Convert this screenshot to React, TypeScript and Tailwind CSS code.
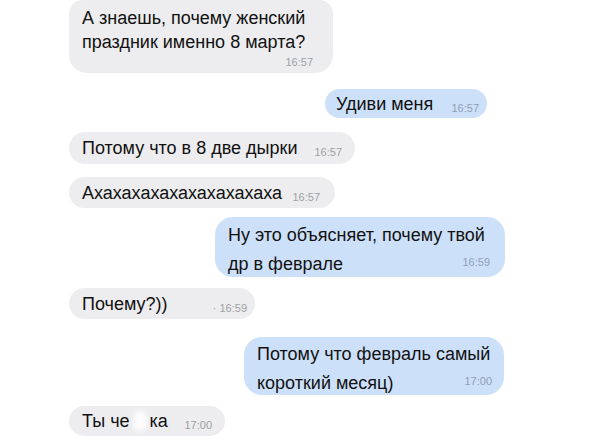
import React from 'react';

const font = { fontFamily: '"Liberation Sans", Arial, sans-serif' };

function Time({ children, blue }: { children: React.ReactNode; blue?: boolean }) {
  return (
    <span className={`text-[11px] leading-[14px] ${blue ? 'text-[#8d9fb6]' : 'text-[#9c9fa4]'}`}>
      {children}
    </span>
  );
}

export default function App() {
  return (
    <div className="w-[600px] h-[440px] overflow-hidden bg-white text-[18px] text-[#111]" style={font}>
      <div className="flex flex-col">
        {/* 1 */}
        <div className="ml-[69px] w-[264px] h-[73px] rounded-b-[18px] rounded-t-[14px] bg-[#ededef] px-[13px] pt-[6px] flex flex-col">
          <div className="leading-[24px] whitespace-nowrap">
            А знаешь, почему женский
            <br />
            праздник именно 8 марта?
          </div>
          <div className="flex justify-end pr-[7px] pt-[1px]">
            <Time>16:57</Time>
          </div>
        </div>

        {/* 2 */}
        <div className="mt-[16px] ml-auto mr-[113px] w-[162px] h-[29px] rounded-full bg-[#cde0f9] pl-[11px] pr-[8px] flex items-center justify-between">
          <span className="leading-[24px]">Удиви меня</span>
          <span className="pt-[5px]"><Time blue>16:57</Time></span>
        </div>

        {/* 3 */}
        <div className="mt-[14px] ml-[69px] w-[286px] h-[32px] rounded-full bg-[#ededef] pl-[13px] pr-[13px] flex items-center justify-between">
          <span className="leading-[24px] whitespace-nowrap">Потому что в 8 две дырки</span>
          <span className="pt-[5px]"><Time>16:57</Time></span>
        </div>

        {/* 4 */}
        <div className="mt-[13px] ml-[69px] w-[266px] h-[31px] rounded-full bg-[#ededef] pl-[13px] pr-[15px] flex items-center justify-between">
          <span className="leading-[24px] whitespace-nowrap">Ахахахахахахахахахаха</span>
          <span className="pt-[5px]"><Time>16:57</Time></span>
        </div>

        {/* 5 */}
        <div className="mt-[9px] ml-auto mr-[95px] w-[290px] h-[60px] rounded-[18px] bg-[#cde0f9] pl-[13px] pr-[15px] pt-[6px] flex flex-col">
          <div className="leading-[24px] whitespace-nowrap">Ну это объясняет, почему твой</div>
          <div className="flex items-end justify-between">
            <span className="leading-[24px]">др в феврале</span>
            <span className="pb-[2px]"><Time blue>16:59</Time></span>
          </div>
        </div>

        {/* 6 */}
        <div className="mt-[11px] ml-[69px] w-[186px] h-[31px] rounded-full bg-[#ededef] pl-[13px] pr-[8px] flex items-center justify-between">
          <span className="leading-[24px]">Почему?))</span>
          <span className="pt-[5px]"><Time>· 16:59</Time></span>
        </div>

        {/* 7 */}
        <div className="mt-[18px] ml-auto mr-[96px] w-[260px] h-[58px] rounded-[18px] bg-[#cde0f9] pl-[13px] pr-[12px] pt-[5px] flex flex-col">
          <div className="leading-[24px] whitespace-nowrap">Потому что февраль самый</div>
          <div className="flex items-end justify-between">
            <span className="leading-[24px]">короткий месяц)</span>
            <span className="pb-[2px]"><Time blue>17:00</Time></span>
          </div>
        </div>

        {/* 8 */}
        <div className="mt-[11px] ml-[69px] w-[156px] h-[30px] rounded-full bg-[#ededef] pl-[13px] pr-[13px] flex items-center justify-between">
          <span className="leading-[24px] flex items-center whitespace-nowrap">
            Ты че
            <span className="mx-[3px] inline-block w-[14px] h-[20px] rounded-[6px] bg-white/80 blur-[2px]" />
            ка
          </span>
          <span className="pt-[5px]"><Time>17:00</Time></span>
        </div>
      </div>
    </div>
  );
}
